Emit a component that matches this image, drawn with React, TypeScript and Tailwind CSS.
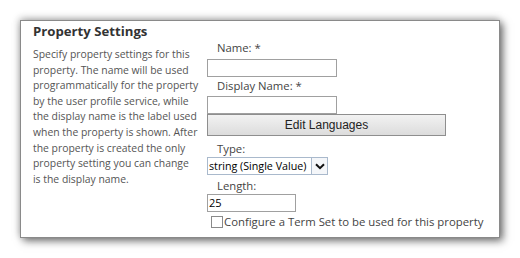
import React from "react";

const seg = { fontFamily: '"Open Sans", "Noto Sans", sans-serif' };

export default function App() {
  return (
    <div className="w-[520px] h-[258px] bg-white overflow-hidden">
      <div className="ml-[20px] mt-[20px] w-[480px] h-[218px] border border-[#8a8a8a] bg-white shadow-[3px_3px_8px_rgba(0,0,0,0.55),-1px_-2px_7px_rgba(0,0,0,0.22)] pl-[12px] pt-[1px]" style={seg}>
        <div className="h-[19px] text-[13.2px] font-bold leading-[19px] text-[#333]">Property Settings</div>
        <div className="flex">
          <div className="w-[174px] pt-[6px] text-[10.4px] leading-[15.6px] text-[#555] whitespace-nowrap">
            Specify property settings for this<br />
            property. The name will be used<br />
            programmatically for the property<br />
            by the user profile service, while<br />
            the display name is the label used<br />
            when the property is shown. After<br />
            the property is created the only<br />
            property setting you can change<br />
            is the display name.
          </div>
          <div className="flex flex-col pl-0">
            <div className="pl-[10px] h-[14px] leading-[14px] text-[11.3px] text-[#444]">Name: *</div>
            <div className="mt-[4px] w-[130px] h-[18px] border border-[#a0a0a0] bg-white" />
            <div className="mt-[2px] pl-[10px] h-[14px] leading-[14px] text-[11.3px] text-[#444]">Display Name: *</div>
            <div className="mt-[3px] w-[130px] h-[18px] border border-[#a0a0a0] bg-white" />
            <div
              className="w-[239px] h-[22px] border border-[#8e8e8e] bg-gradient-to-b from-[#f2f2f2] to-[#dcdcdc] flex items-center justify-center text-[12px] text-[#222]"
              style={{ fontFamily: '"Liberation Sans", Arial, sans-serif' }}
            >
              Edit Languages
            </div>
            <div className="mt-[6px] pl-[10px] h-[14px] leading-[14px] text-[11.3px] text-[#444]">Type:</div>
            <div className="mt-[1px] w-[121px] h-[18px] border border-[#a9b9cc] bg-white flex items-center">
              <span className="flex-1 pl-[1px] text-[10.7px] leading-[16px] text-black whitespace-nowrap">string (Single Value)</span>
              <span className="w-[16px] h-[16px] border-l border-[#a9b9cc] bg-[#f4f6f9] flex items-center justify-center">
                <svg width="10" height="7" viewBox="0 0 10 7">
                  <path d="M1 1.2 L5 5.2 L9 1.2" fill="none" stroke="#111" strokeWidth="2" />
                </svg>
              </span>
            </div>
            <div className="mt-[4px] pl-[10px] h-[14px] leading-[14px] text-[11.3px] text-[#444]">Length:</div>
            <div className="mt-[1px] w-[89px] h-[18px] border border-[#a0a0a0] bg-white flex items-center pl-[1px] text-[11px] text-black">25</div>
            <div className="mt-[3px] h-[14px] flex items-center pl-[4px]">
              <span className="w-[12px] h-[12px] border border-[#8a8a8a] bg-white" />
              <span className="ml-[1px] text-[11.35px] leading-[14px] text-[#444] whitespace-nowrap">Configure a Term Set to be used for this property</span>
            </div>
          </div>
        </div>
      </div>
    </div>
  );
}
